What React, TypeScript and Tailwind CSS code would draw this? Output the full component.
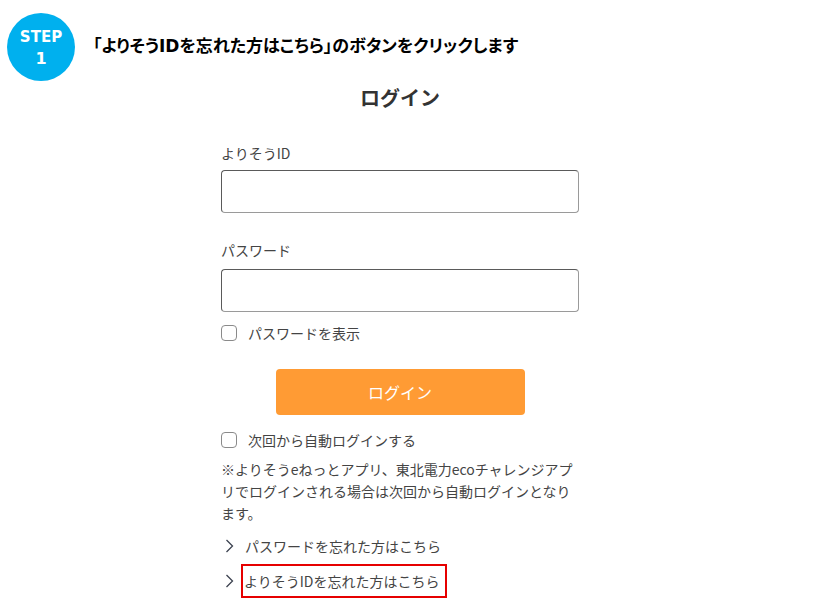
import React from 'react';

function Checkbox({ label }: { label: string }) {
  return (
    <label className="flex h-[20px] items-center">
      <span className="h-[16px] w-[16px] rounded-[4px] border border-[#8a8a8a] bg-white" />
      <span className="ml-[11px] text-[14px] leading-[20px] text-[#444]">{label}</span>
    </label>
  );
}

function Chevron() {
  return (
    <svg width="9" height="14" viewBox="0 0 9 14" fill="none" stroke="#3c4250" strokeWidth="1.3">
      <polyline points="1.5,1 7.5,7 1.5,13" />
    </svg>
  );
}

export default function App() {
  return (
    <div
      className="h-[613px] w-[823px] overflow-hidden bg-white"
      style={{ fontFamily: '"Noto Sans CJK JP", "Noto Sans", sans-serif' }}
    >
      <div className="flex items-center pl-[7px] pt-[13px]">
        <div className="flex h-[68px] w-[68px] flex-col items-center justify-center rounded-full bg-[#00b0ee] pt-[1px] text-white [font-family:'DejaVu_Sans',sans-serif]">
          <span className="text-[15px] font-bold leading-[22px]">STEP</span>
          <span className="text-[16px] font-bold leading-[22px]">1</span>
        </div>
        <h1 className="ml-[18px] text-[17px] font-bold text-black [font-family:'DejaVu_Sans','Noto_Sans_CJK_JP',sans-serif] [font-feature-settings:'palt']">
          「よりそうIDを忘れた方はこちら」のボタンをクリックします
        </h1>
      </div>

      <div className="ml-[221px] w-[358px] text-[#444]">
        <h2 className="mt-[3px] text-center text-[20px] font-bold leading-[28px] text-[#333]">ログイン</h2>

        <div className="mt-[31px] text-[14px] leading-[20px]">よりそうID</div>
        <div className="mt-[7px] h-[43px] rounded-[4px] border border-[#5a5a5a] border-b-[#9a9a9a] border-r-[#9a9a9a]" />

        <div className="mt-[27px] text-[14px] leading-[20px]">パスワード</div>
        <div className="mt-[9px] h-[43px] rounded-[4px] border border-[#5a5a5a] border-b-[#9a9a9a] border-r-[#9a9a9a]" />

        <div className="mt-[11px]">
          <Checkbox label="パスワードを表示" />
        </div>

        <button className="mx-auto mt-[26px] flex h-[46px] w-[249px] items-center justify-center rounded-[4px] bg-[#ff9b34] text-[16px] text-white">
          ログイン
        </button>

        <div className="mt-[15px]">
          <Checkbox label="次回から自動ログインする" />
        </div>

        <p className="mt-[8px] text-[14px] leading-[22px] text-[#444]">
          ※よりそうeねっとアプリ、東北電力ecoチャレンジアプリでログインされる場合は次回から自動ログインとなります。
        </p>

        <div className="mt-[11px] flex h-[22px] items-center pl-[4px]">
          <Chevron />
          <span className="ml-[11px] text-[14px] text-[#444]">パスワードを忘れた方はこちら</span>
        </div>

        <div className="mt-[7px] flex items-center pl-[4px]">
          <Chevron />
          <span className="ml-[7px] flex h-[34px] w-[206px] items-center border-2 border-[#e60000] pl-[1px] text-[14px] text-[#444]">
            よりそうIDを忘れた方はこちら
          </span>
        </div>
      </div>
    </div>
  );
}
